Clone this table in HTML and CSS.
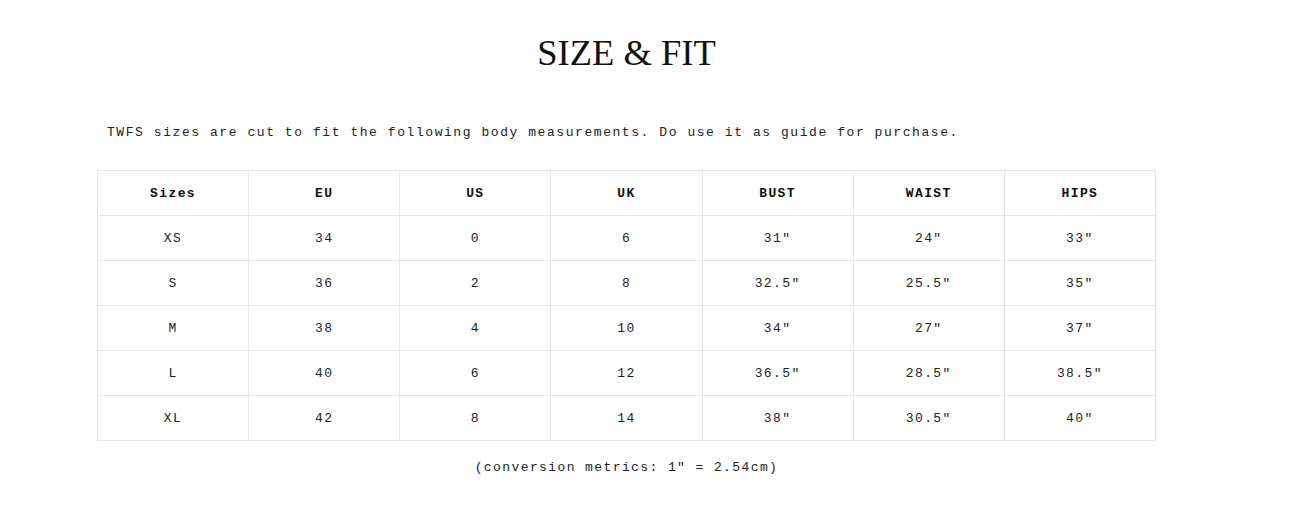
FILE: index.html
```html
<!DOCTYPE html>
<html>
<head>
<meta charset="utf-8">
<link rel="stylesheet" href="styles.css">
</head>
<body>
<div class="page">
  <h1 class="title">SIZE &amp; FIT</h1>
  <p class="intro">TWFS sizes are cut to fit the following body measurements. Do use it as guide for purchase.</p>
  <table class="sizes">
    <thead>
      <tr><th>Sizes</th><th>EU</th><th>US</th><th>UK</th><th>BUST</th><th>WAIST</th><th>HIPS</th></tr>
    </thead>
    <tbody>
      <tr><td>XS</td><td>34</td><td>0</td><td>6</td><td>31"</td><td>24"</td><td>33"</td></tr>
      <tr><td>S</td><td>36</td><td>2</td><td>8</td><td>32.5"</td><td>25.5"</td><td>35"</td></tr>
      <tr><td>M</td><td>38</td><td>4</td><td>10</td><td>34"</td><td>27"</td><td>37"</td></tr>
      <tr><td>L</td><td>40</td><td>6</td><td>12</td><td>36.5"</td><td>28.5"</td><td>38.5"</td></tr>
      <tr><td>XL</td><td>42</td><td>8</td><td>14</td><td>38"</td><td>30.5"</td><td>40"</td></tr>
    </tbody>
  </table>
  <p class="note">(conversion metrics: 1" = 2.54cm)</p>
</div>
</body>
</html>
```
FILE: styles.css
```css
html, body {
  margin: 0;
  padding: 0;
  background: #fff;
  color: #111;
}
.page {
  width: 1059px;
  margin-left: 97px;
  padding-top: 32px;
}
.title {
  margin: 0;
  text-align: center;
  font-family: "Liberation Serif", serif;
  font-weight: normal;
  font-size: 36.5px;
  line-height: 42px;
  color: #111;
}
.intro {
  margin: 50px 0 0 10px;
  font-family: "Liberation Mono", monospace;
  font-size: 13px;
  letter-spacing: 1.56px;
  line-height: 18px;
  color: #222;
}
.sizes {
  margin-top: 28px;
  width: 1059px;
  border-collapse: collapse;
  table-layout: fixed;
  font-family: "Liberation Mono", monospace;
  font-size: 13px;
  letter-spacing: 1.4px;
  color: #222;
}
.sizes th, .sizes td {
  border: 1px solid #e8e6e0;
  height: 44px;
  padding: 0;
  text-align: center;
  vertical-align: middle;
}
.sizes th {
  font-weight: bold;
  color: #111;
}
.note {
  margin: 18px 0 0;
  text-align: center;
  font-family: "Liberation Mono", monospace;
  font-size: 13px;
  letter-spacing: 1.4px;
  line-height: 18px;
  color: #222;
}
```
